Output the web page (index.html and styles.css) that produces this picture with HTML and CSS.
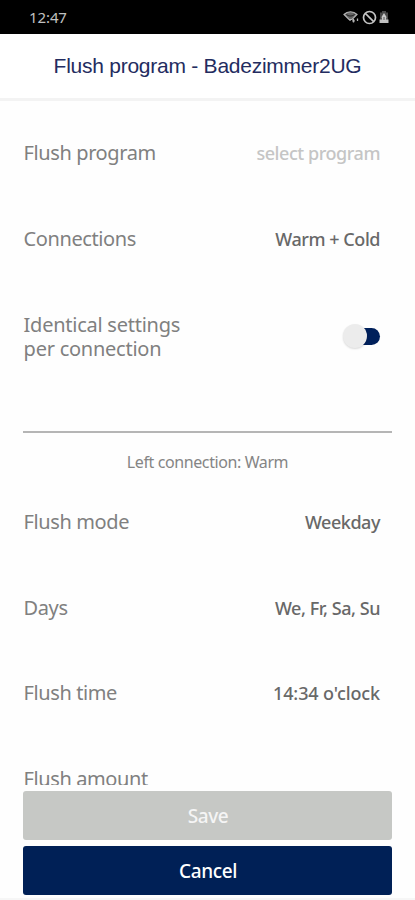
FILE: index.html
```
<!DOCTYPE html>
<html lang="en">

<head>
    <meta charset="UTF-8">
    <meta name="viewport" content="width=device-width, initial-scale=1.0">
    <title>Flush program</title>
    <link rel="stylesheet" href="styles.css">
</head>

<body>
    <div class="status-bar">
        <span class="status-time">12:47</span>
        <div class="status-icons">
            <svg width="17" height="14" viewBox="0 0 17 14" fill="none" stroke="#b4b4b4">
                <path d="M1 4.500C4.500 .8 10.500 .8 14 4.500L9 9.500H6Z" fill="#666" stroke-width="1.200" />
                <path d="M3.500 4.500C6 6.500 9 6.500 11.500 4.500" stroke="#111" stroke-width="1" />
                <path d="M7 9v2M10.500 9v3.500M9.200 10.800h2.600M14.500 11V8.500" stroke-width="1.300" />
            </svg>
            <svg width="15" height="15" viewBox="0 0 15 15" fill="none" stroke="#c4c4c4" stroke-width="1.700">
                <circle cx="7.500" cy="7.500" r="6" />
                <path d="M3.300 3.300l8.400 8.400" />
            </svg>
            <svg width="10" height="14" viewBox="0 0 10 14">
                <path d="M3 1h4v1.500h2V13H1V2.500h2z" fill="#484848" />
                <path d="M.5 9.500h9V13h-9z" fill="#c0c0c0" />
                <path d="M5 3l2.500 4-1 4h-3l-1-4z" fill="#c8c8c8" />
                <path d="M5 7v3" stroke="#555" stroke-width="1" />
            </svg>
        </div>
    </div>

    <header class="page-header">
        <h1 class="page-title">Flush program - Badezimmer2UG</h1>
    </header>

    <main class="settings">
        <div class="row">
            <span class="label">Flush program</span>
            <span class="value placeholder">select program</span>
        </div>
        <div class="row">
            <span class="label">Connections</span>
            <span class="value">Warm + Cold</span>
        </div>
        <div class="row row-tall">
            <span class="label label-wrap">Identical settings<br>per connection</span>
            <span class="toggle"><span class="toggle-knob"></span></span>
        </div>

        <div class="section">Left connection: Warm</div>

        <div class="row">
            <span class="label">Flush mode</span>
            <span class="value">Weekday</span>
        </div>
        <div class="row">
            <span class="label">Days</span>
            <span class="value">We, Fr, Sa, Su</span>
        </div>
        <div class="row">
            <span class="label">Flush time</span>
            <span class="value value-time">14:34 o'clock</span>
        </div>
        <div class="row">
            <span class="label">Flush amount</span>
        </div>
    </main>

    <footer class="actions">
        <button class="btn btn-save" disabled>Save</button>
        <button class="btn btn-cancel">Cancel</button>
    </footer>
</body>

</html>
```
FILE: styles.css
```
* {
    box-sizing: border-box;
}

body {
    margin: 0;
    height: 900px;
    display: flex;
    flex-direction: column;
    overflow: hidden;
    background-color: #fefefe;
    font-family: "Noto Sans", sans-serif;
    color: #808080;
}

.status-bar {
    height: 34px;
    flex: none;
    display: flex;
    justify-content: space-between;
    align-items: center;
    padding: 0 26px 0 29px;
    background-color: #000;
    color: #c0c0c0;
}

.status-time {
    font-size: 15px;
    letter-spacing: -0.1px;
}

.status-icons {
    display: flex;
    align-items: center;
    gap: 2px;
}

.page-header {
    height: 67px;
    flex: none;
    display: flex;
    justify-content: center;
    align-items: center;
    padding-bottom: 1px;
    background-color: #fff;
    border-bottom: 3px solid #f3f3f3;
}

.page-title {
    margin: 0;
    font-family: "Liberation Sans", Arial, sans-serif;
    font-size: 21px;
    font-weight: 400;
    letter-spacing: -0.25px;
    color: #232c60;
    white-space: nowrap;
}

.settings {
    height: 684px;
    flex: none;
    padding: 9px 23px 0;
    overflow: hidden;
}

.row {
    height: 85.8px;
    display: flex;
    justify-content: space-between;
    align-items: center;
    padding: 0 12px 0 0.6px;
}

.row-tall {
    height: 109px;
}

.label {
    font-size: 20px;
    line-height: 24px;
    letter-spacing: -0.4px;
}

.label-wrap {
    padding-top: 1px;
    letter-spacing: -0.25px;
}

.value {
    font-size: 18px;
    font-weight: 500;
    line-height: 24px;
    letter-spacing: -0.45px;
    color: #686868;
}

.value-time {
    letter-spacing: -0.1px;
}

.placeholder {
    color: #c5c5c5;
}

.toggle {
    position: relative;
    width: 34px;
    height: 17px;
    border-radius: 9px;
    background-color: #00205b;
}

.toggle-knob {
    position: absolute;
    left: -3px;
    top: -4px;
    width: 24px;
    height: 24px;
    border-radius: 50%;
    background-color: #ececec;
    box-shadow: 0 1px 2px rgba(0, 0, 0, 0.15);
}

.section {
    height: 48.4px;
    margin-top: 40px;
    padding-top: 17px;
    border-top: 2px solid #b5b5b5;
    font-size: 16px;
    line-height: 24px;
    letter-spacing: -0.4px;
    text-align: center;
    color: #858585;
}

.actions {
    display: flex;
    flex-direction: column;
    gap: 6px;
    flex: 1;
    padding: 6px 23px 0;
    border-bottom: 2px solid #f6f6f6;
}

.btn {
    height: 49px;
    flex: none;
    border: none;
    border-radius: 3px;
    padding: 0 0 0 1px;
    font-family: inherit;
    font-size: 19px;
    font-weight: 500;
    letter-spacing: -0.4px;
    color: #fff;
}

.btn-save {
    background-color: #c6c8c5;
    color: #f5f5f5;
}

.btn-cancel {
    background-color: #002056;
}
```
